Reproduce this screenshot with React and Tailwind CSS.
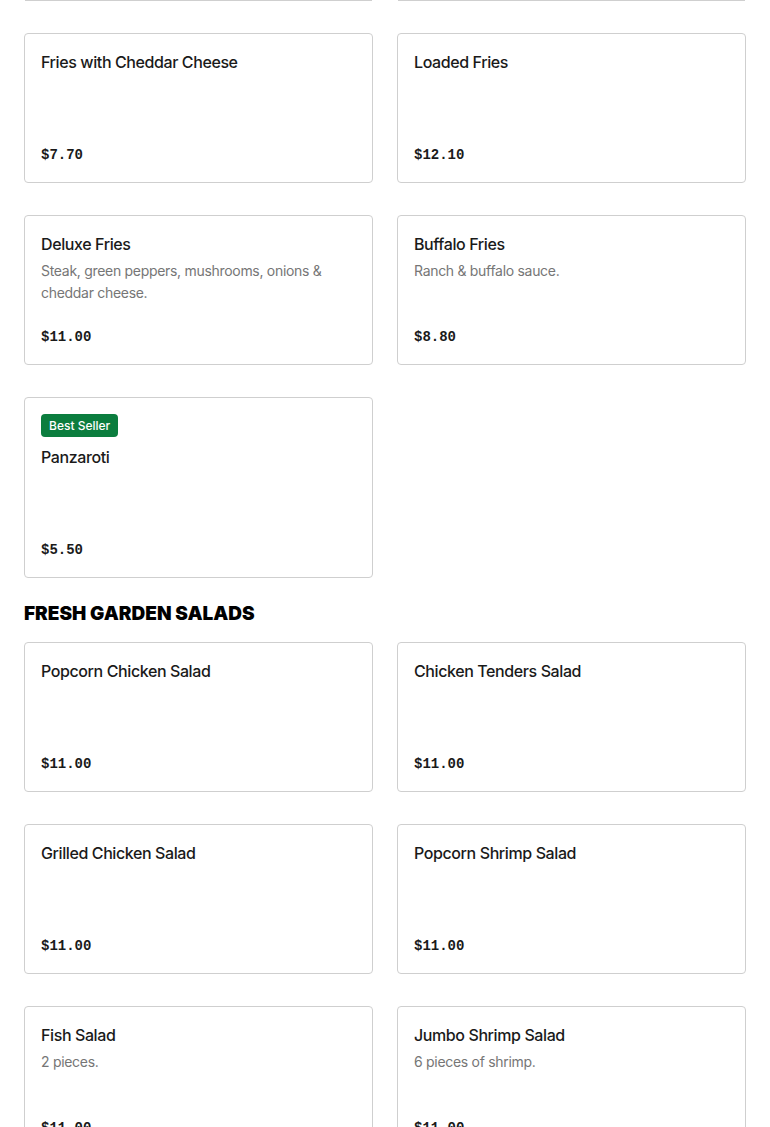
const fries = [
  [
    {name: 'Fries with Cheddar Cheese', price: '$7.70'},
    {name: 'Loaded Fries', price: '$12.10'},
  ],
  [
    {name: 'Deluxe Fries', desc: 'Steak, green peppers, mushrooms, onions & cheddar cheese.', price: '$11.00'},
    {name: 'Buffalo Fries', desc: 'Ranch & buffalo sauce.', price: '$8.80'},
  ],
  [{name: 'Panzaroti', price: '$5.50', badge: 'Best Seller'}],
];

const salads = [
  {name: 'Popcorn Chicken Salad', price: '$11.00'},
  {name: 'Chicken Tenders Salad', price: '$11.00'},
  {name: 'Grilled Chicken Salad', price: '$11.00'},
  {name: 'Popcorn Shrimp Salad', price: '$11.00'},
  {name: 'Fish Salad', desc: '2 pieces.', price: '$11.00'},
  {name: 'Jumbo Shrimp Salad', desc: '6 pieces of shrimp.', price: '$11.00'},
];

function Item({item}) {
  return (
    <div className="flex flex-col rounded border border-[#cfcfcf] bg-white px-4 pt-4 pb-[15px]">
      {item.badge && (
        <span className="mb-2 self-start rounded bg-[#0b7d3e] px-2 py-[3px] text-[12px] font-medium leading-[17px] text-white">
          {item.badge}
        </span>
      )}
      <h3 className="text-[16px] font-medium leading-6 tracking-[-0.4px] text-[#1a1a1a]">{item.name}</h3>
      <p className="mt-1 min-h-[44px] text-[14px] leading-[22px] tracking-[-0.3px] text-[#767676]">{item.desc}</p>
      <div className="mt-[21px] font-['Liberation_Mono',monospace] text-[14px] font-bold leading-6 text-[#1a1a1a]">
        {item.price}
      </div>
    </div>
  );
}

export default function App() {
  return (
    <div className="min-h-screen bg-white font-['Inter',sans-serif]">
      <div className="px-6">
        {/* bottom edge of the row scrolled above */}
        <div className="grid grid-cols-2 gap-6">
          <div className="mx-px h-px bg-[#cfcfcf]" />
          <div className="mx-px h-px bg-[#cfcfcf]" />
        </div>

        <div className="mt-8 flex flex-col gap-8">
          {fries.map((row, i) => (
            <div key={i} className="grid grid-cols-2 gap-6">
              {row.map((item) => (
                <Item key={item.name} item={item} />
              ))}
            </div>
          ))}
        </div>

        <h2 className="mt-[22px] mb-[14px] text-[19px] font-black uppercase leading-7 text-black">
          Fresh Garden Salads
        </h2>

        <div className="grid grid-cols-2 gap-x-6 gap-y-8 pb-8">
          {salads.map((item) => (
            <Item key={item.name} item={item} />
          ))}
        </div>
      </div>
    </div>
  );
}
